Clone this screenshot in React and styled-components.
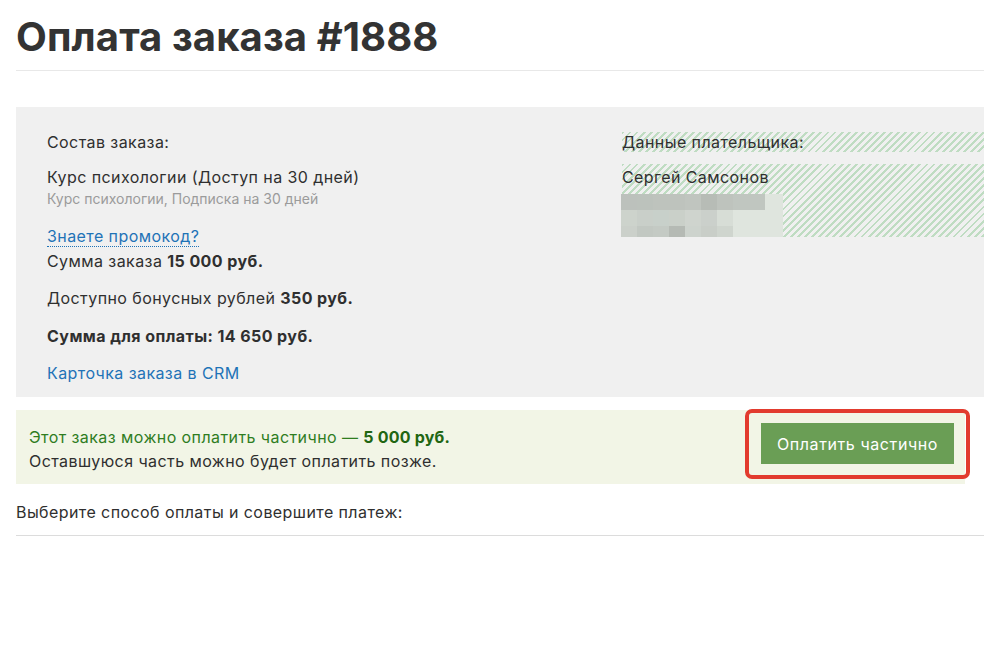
import React from 'react'
import styled, { createGlobalStyle } from 'styled-components'

const GlobalStyle = createGlobalStyle`
  html, body {
    margin: 0;
    padding: 0;
    background: #ffffff;
  }
  body {
    font-family: Inter, "Noto Sans", "DejaVu Sans", sans-serif;
    color: #2f2f2f;
    letter-spacing: 0.42px;
    overflow: hidden;
  }
`

const blur = [
  ['#bcc1bc', '#bcc2bc', '#bec3bd', '#bec3bd', '#c0c5bf', '#b7bcb6', '#bec3bd', '#c0c6c0', '#c0c6c0', '#dfe5de'],
  ['#cdd3cc', '#c9cfc9', '#c8d0ca', '#cad0c9', '#cfd4ce', '#cbd0cb', '#d7ddd6', '#dfe5de', '#dfe5de', '#dfe5de'],
  ['#cbd0ca', '#c2c8c2', '#c4cac4', '#b5bab4', '#cdd3cd', '#c9cec8', '#cfd5ce', '#dfe5de', '#dfe5de', '#dfe5de'],
]

export default function App() {
  return (
    <Page>
      <GlobalStyle />
      <Title>Оплата заказа #1888</Title>
      <Divider $gap={9} />

      <OrderBox>
        <OrderColumn>
          <Label>Состав заказа:</Label>
          <ItemName>Курс психологии (Доступ на 30 дней)</ItemName>
          <ItemNote>Курс психологии, Подписка на 30 дней</ItemNote>
          <Line $gap={16}>
            <PromoLink href="#">Знаете промокод?</PromoLink>
          </Line>
          <Line $gap={1}>
            Сумма заказа <b>15 000 руб.</b>
          </Line>
          <Line $gap={13}>
            Доступно бонусных рублей <b>350 руб.</b>
          </Line>
          <Line $gap={14}>
            <b>Сумма для оплаты: 14 650 руб.</b>
          </Line>
          <Line $gap={13}>
            <CrmLink href="#">Карточка заказа в CRM</CrmLink>
          </Line>
        </OrderColumn>

        <PayerColumn>
          <Hatched>Данные плательщика:</Hatched>
          <HatchedBlock>
            <PayerName>Сергей Самсонов</PayerName>
            <Mosaic>
              {blur.flat().map((c, i) => (
                <Cell key={i} style={{ background: c }} />
              ))}
            </Mosaic>
          </HatchedBlock>
        </PayerColumn>
      </OrderBox>

      <PartialBox>
        <PartialText>
          <GreenLine>
            Этот заказ можно оплатить частично — <b>5 000 руб.</b>
          </GreenLine>
          <div>Оставшуюся часть можно будет оплатить позже.</div>
        </PartialText>
        <Highlight>
          <PayButton>Оплатить частично</PayButton>
        </Highlight>
      </PartialBox>

      <Choose>Выберите способ оплаты и совершите платеж:</Choose>
      <Divider $gap={11} $color="#dcdcdc" />
    </Page>
  )
}

const Page = styled.div`
  padding-left: 16px;
  width: 1000px;
`

const Title = styled.h1`
  margin: 0;
  padding-top: 13px;
  font-size: 40px;
  line-height: 48px;
  font-weight: 700;
  color: #333333;
  letter-spacing: 0.1px;
`

const Divider = styled.div`
  height: 1px;
  background: ${({ $color }) => $color || '#e8e8e8'};
  margin-top: ${({ $gap }) => $gap}px;
`

const OrderBox = styled.section`
  display: flex;
  margin-top: 36px;
  background: #f0f0f0;
  padding: 23px 0 12px 31px;
`

const OrderColumn = styled.div`
  width: 575px;
  font-size: 16px;
  line-height: 24px;

  b {
    font-weight: 700;
  }
`

const Label = styled.div``

const ItemName = styled.div`
  margin-top: 11px;
`

const ItemNote = styled.div`
  font-size: 14px;
  line-height: 18px;
  letter-spacing: 0;
  color: #9b9b9b;
  margin-top: 1px;
`

const Line = styled.div`
  margin-top: ${({ $gap }) => $gap}px;
`

const PromoLink = styled.a`
  color: #1f73b7;
  text-decoration: none;
  border-bottom: 1px dotted #1f73b7;
`

const CrmLink = styled.a`
  color: #1f73b7;
  text-decoration: none;
`

const PayerColumn = styled.div`
  flex: 1;
  padding-top: 2px;
  font-size: 16px;
`

const hatch = `
  background: repeating-linear-gradient(
    135deg,
    #bfdcc2 0 2px,
    transparent 2px 5px
  );
`

const Hatched = styled.div`
  ${hatch}
  height: 20px;
  line-height: 20px;
`

const HatchedBlock = styled.div`
  ${hatch}
  margin-top: 12px;
  height: 73px;
`

const PayerName = styled.div`
  line-height: 20px;
  padding-top: 3px;
`

const Mosaic = styled.div`
  display: grid;
  grid-template-columns: repeat(9, 16px) 18px;
  grid-template-rows: 16px 16px 11px;
  margin-top: 7px;
  margin-left: -1px;
  width: 162px;
`

const Cell = styled.div``

const PartialBox = styled.section`
  display: flex;
  align-items: center;
  justify-content: space-between;
  margin-top: 13px;
  width: 949px;
  box-sizing: border-box;
  height: 74px;
  padding: 0 11px 0 13px;
  background: #f2f5e6;
`

const PartialText = styled.div`
  font-size: 16px;
  line-height: 24px;
  padding-top: 3px;
`

const GreenLine = styled.div`
  color: #2f7d1f;

  b {
    color: #216612;
    font-weight: 700;
    letter-spacing: 0.2px;
  }
`

const Highlight = styled.div`
  position: relative;
  margin-top: -7px;

  &::after {
    content: '';
    position: absolute;
    inset: -14px -16px -15px -16px;
    border: 4px solid #e23b2e;
    border-radius: 7px;
    pointer-events: none;
  }
`

const PayButton = styled.button`
  display: block;
  width: 193px;
  height: 41px;
  border: none;
  background: #6a9e55;
  color: #ffffff;
  font-family: inherit;
  font-size: 16px;
  letter-spacing: 0.6px;
  cursor: pointer;
`

const Choose = styled.div`
  margin-top: 16px;
  font-size: 16px;
  line-height: 24px;
`
